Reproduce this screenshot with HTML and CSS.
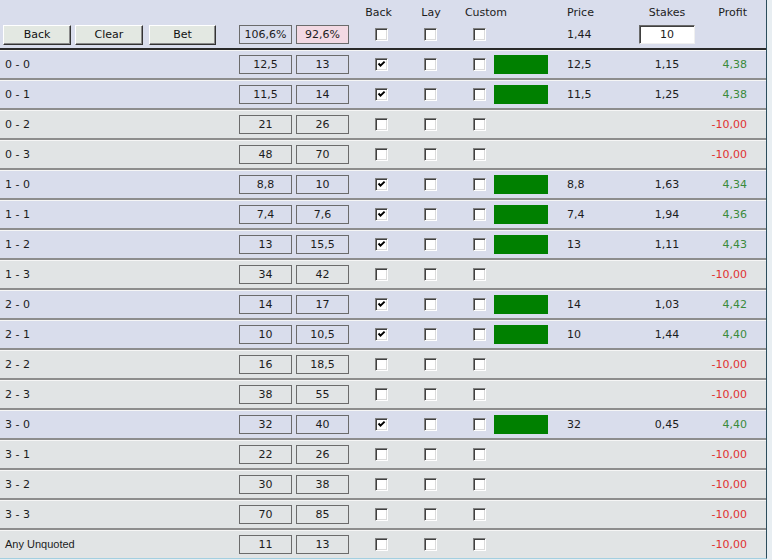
FILE: index.html
```html
<!DOCTYPE html>
<html lang="en">
<head>
  <meta charset="UTF-8">
  <title>Correct Score</title>
  <link rel="stylesheet" href="styles.css">
</head>
<body>
  <div class="panel">
    <div class="labels">
      <span class="h-back">Back</span>
      <span class="h-lay">Lay</span>
      <span class="h-custom">Custom</span>
      <span class="h-price">Price</span>
      <span class="h-stakes">Stakes</span>
      <span class="h-profit">Profit</span>
    </div>

    <div class="controls">
      <div class="lead">
        <button class="btn">Back</button>
        <button class="btn">Clear</button>
        <button class="btn bet">Bet</button>
      </div>
      <span class="box">106,6%</span>
      <span class="box pink">92,6%</span>
      <span class="cb back"></span>
      <span class="cb"></span>
      <span class="cb"></span>
      <span class="bar none"></span>
      <span class="price">1,44</span>
      <span class="stakes"><span class="stake-input">10</span></span>
      <span class="profit"></span>
    </div>

    <div id="rows"></div>
  </div>

  <script>
    const rows = [
      ["0 - 0", "12,5", "13", true, "12,5", "1,15", "4,38"],
      ["0 - 1", "11,5", "14", true, "11,5", "1,25", "4,38"],
      ["0 - 2", "21", "26"],
      ["0 - 3", "48", "70"],
      ["1 - 0", "8,8", "10", true, "8,8", "1,63", "4,34"],
      ["1 - 1", "7,4", "7,6", true, "7,4", "1,94", "4,36"],
      ["1 - 2", "13", "15,5", true, "13", "1,11", "4,43"],
      ["1 - 3", "34", "42"],
      ["2 - 0", "14", "17", true, "14", "1,03", "4,42"],
      ["2 - 1", "10", "10,5", true, "10", "1,44", "4,40"],
      ["2 - 2", "16", "18,5"],
      ["2 - 3", "38", "55"],
      ["3 - 0", "32", "40", true, "32", "0,45", "4,40"],
      ["3 - 1", "22", "26"],
      ["3 - 2", "30", "38"],
      ["3 - 3", "70", "85"],
      ["Any Unquoted", "11", "13"]
    ];

    const tick = '<svg viewBox="0 0 9 9" width="9" height="9"><polyline points="1.5,3.5 3.5,5.6 7.6,1.6" fill="none" stroke="#000" stroke-width="2"/></svg>';

    let html = "";
    rows.forEach(r => {
      const on = r[3] === true;
      const small = r[0].length > 5 ? " small" : "";
      html += `<div class="row${on ? " on" : ""}">
        <span class="lead${small}">${r[0]}</span>
        <span class="box">${r[1]}</span>
        <span class="box">${r[2]}</span>
        <span class="cb back">${on ? tick : ""}</span>
        <span class="cb"></span>
        <span class="cb"></span>
        <span class="bar${on ? "" : " none"}"></span>
        <span class="price">${on ? r[4] : ""}</span>
        <span class="stakes">${on ? r[5] : ""}</span>
        <span class="profit ${on ? "win" : "loss"}">${on ? r[6] : "-10,00"}</span>
      </div>`;
    });
    document.getElementById("rows").innerHTML = html;
  </script>
</body>
</html>
```

FILE: styles.css
```css
* { box-sizing: border-box; }

body {
  margin: 0;
  background: #e8eef2;
  font-family: "DejaVu Sans", sans-serif;
  font-size: 11px;
  color: #1c1c1c;
}

.panel {
  width: 767px;
  height: 559px;
  background: #d9ddec;
  border-right: 1px solid #2c4d5c;
  border-bottom: 1px solid #a3cfe0;
  overflow: hidden;
}

/* header labels */
.labels {
  display: flex;
  align-items: center;
  height: 21px;
  padding-left: 349px;
  padding-top: 3px;
}

.labels span { text-align: center; }
.h-back { width: 59px; }
.h-lay { width: 46px; }
.h-custom { width: 64px; }
.h-price { width: 125px; }
.h-stakes { width: 48px; }
.h-profit { width: 56px; text-align: right !important; }

/* shared row layout */
.controls, .row {
  display: flex;
  align-items: center;
}

.controls { height: 27px; }

.row {
  height: 30px;
  background: #e1e4e5;
  border-top: 2px solid #8d8d8d;
  box-shadow: inset 0 1px 0 #f6f6f6;
}

.row:first-child { border-top-color: #2a2a2a; }
.row.on { background: #d9ddec; }

.lead {
  width: 239px;
  flex: none;
  padding-left: 5px;
}

.lead.small {
  font-family: "Liberation Sans", Arial, sans-serif;
  font-size: 11px;
}

.controls .lead {
  display: flex;
  gap: 4px;
  padding-left: 3px;
}

.btn {
  width: 68px;
  height: 20px;
  padding: 0;
  font-family: "DejaVu Sans", sans-serif;
  font-size: 11px;
  color: #111;
  background: #e3e8e2;
  border: 1px solid;
  border-color: #fff #333 #333 #fff;
  box-shadow: inset -1px -1px 0 #8a8a8a;
}

.btn.bet { margin-left: 2px; width: 67px; }

.box {
  width: 53px;
  height: 19px;
  flex: none;
  border: 1px solid #6b6b6b;
  text-align: center;
  line-height: 17px;
}

.box + .box { margin-left: 4px; }
.box.pink { background: #f3d9e3; }

.cb {
  width: 13px;
  height: 13px;
  flex: none;
  margin-left: 36px;
  padding: 1px;
  background: #fff;
  border: 1px solid;
  border-color: #808080 #fff #fff #808080;
  box-shadow: inset 1px 1px 0 #404040, inset -1px -1px 0 #dcdcdc;
}

.cb.back { margin-left: 26px; }
.cb svg { display: block; }

.bar {
  width: 54px;
  height: 19px;
  flex: none;
  margin-left: 8px;
  background: #008000;
}

.bar.none { background: none; }

.price {
  width: 60px;
  flex: none;
  margin-left: 19px;
}

.stakes {
  width: 60px;
  flex: none;
  margin-left: 10px;
  text-align: center;
}

.stake-input {
  display: block;
  width: 56px;
  height: 19px;
  margin: 0 auto;
  background: #fff;
  border: 1px solid;
  border-color: #6a6a6a #f0f0f0 #f0f0f0 #6a6a6a;
  box-shadow: inset 1px 1px 0 #404040;
  line-height: 17px;
  text-align: center;
}

.profit {
  width: 50px;
  flex: none;
  text-align: right;
}

.profit.win { color: #3a8a3a; }
.profit.loss { color: #e03030; }
```
